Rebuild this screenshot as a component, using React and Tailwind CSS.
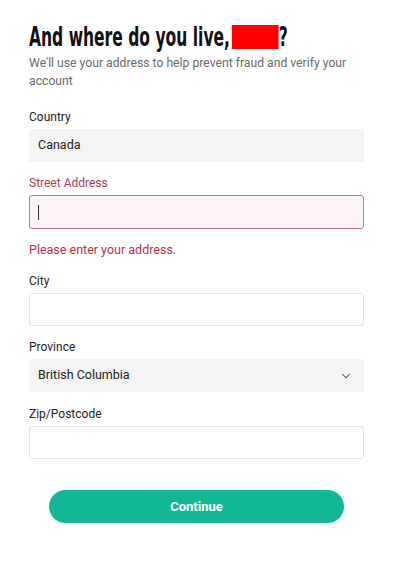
import { ChevronDown } from 'lucide-react';

const body = { fontFamily: 'Roboto, "Noto Sans", Arial, sans-serif' };

function Label({ children, error }) {
  return (
    <label className={`block text-[12px] leading-4 mb-[4px] ${error ? 'text-[#b23a55]' : 'text-[#222]'}`}>
      {children}
    </label>
  );
}

export default function App() {
  return (
    <div className="w-[400px] h-[561px] bg-white overflow-hidden" style={body}>
      <div className="pl-[29px] pr-[36px] pt-[21px]">
        {/* Heading */}
        <h1 className="h-[32px] flex items-center whitespace-nowrap">
          <span
            className="inline-flex items-center origin-left scale-x-[0.64] text-[27px] font-bold text-[#111] leading-8"
            style={{ fontFamily: '"DejaVu Sans Condensed", "DejaVu Sans", sans-serif' }}
          >
            And where do you live,
            <span className="inline-block w-[73px] h-[24px] bg-[#ff0000] ml-[3px]" />
            ?
          </span>
        </h1>
        <p className="text-[12.2px] leading-[18px] text-[#6b6b6b] mt-[1px]">
          We'll use your address to help prevent fraud and verify your account
        </p>

        <div className="mt-[19px]">
          <Label>Country</Label>
          <div className="h-[33px] rounded-[3px] bg-[#f4f4f4] flex items-center px-[9px] text-[12.5px] text-[#222]">
            Canada
          </div>
        </div>

        <div className="mt-[13px]">
          <Label error>Street Address</Label>
          <div className="h-[34px] rounded-[3px] border border-[#c47385] bg-[#fcf3f4] flex items-center px-[8px]">
            <span className="w-px h-[15px] bg-[#333]" />
          </div>
          <p className="mt-[11px] text-[12.5px] leading-5 text-[#b3304d]">Please enter your address.</p>
        </div>

        <div className="mt-[13px]">
          <Label>City</Label>
          <div className="h-[33px] rounded-[3px] border border-[#e4e4e4] bg-white" />
        </div>

        <div className="mt-[13px]">
          <Label>Province</Label>
          <div className="h-[33px] rounded-[3px] bg-[#f4f4f4] flex items-center justify-between pl-[9px] pr-[11px] text-[12.5px] text-[#222]">
            <span>British Columbia</span>
            <ChevronDown size={14} strokeWidth={1.75} className="text-[#444]" />
          </div>
        </div>

        <div className="mt-[14px]">
          <Label>Zip/Postcode</Label>
          <div className="h-[33px] rounded-[3px] border border-[#e4e4e4] bg-white" />
        </div>

        <div className="mt-[31px] flex justify-center">
          <button
            type="button"
            className="w-[295px] h-[33px] rounded-full bg-[#12b894] text-white text-[13px] font-bold"
          >
            Continue
          </button>
        </div>
      </div>
    </div>
  );
}
